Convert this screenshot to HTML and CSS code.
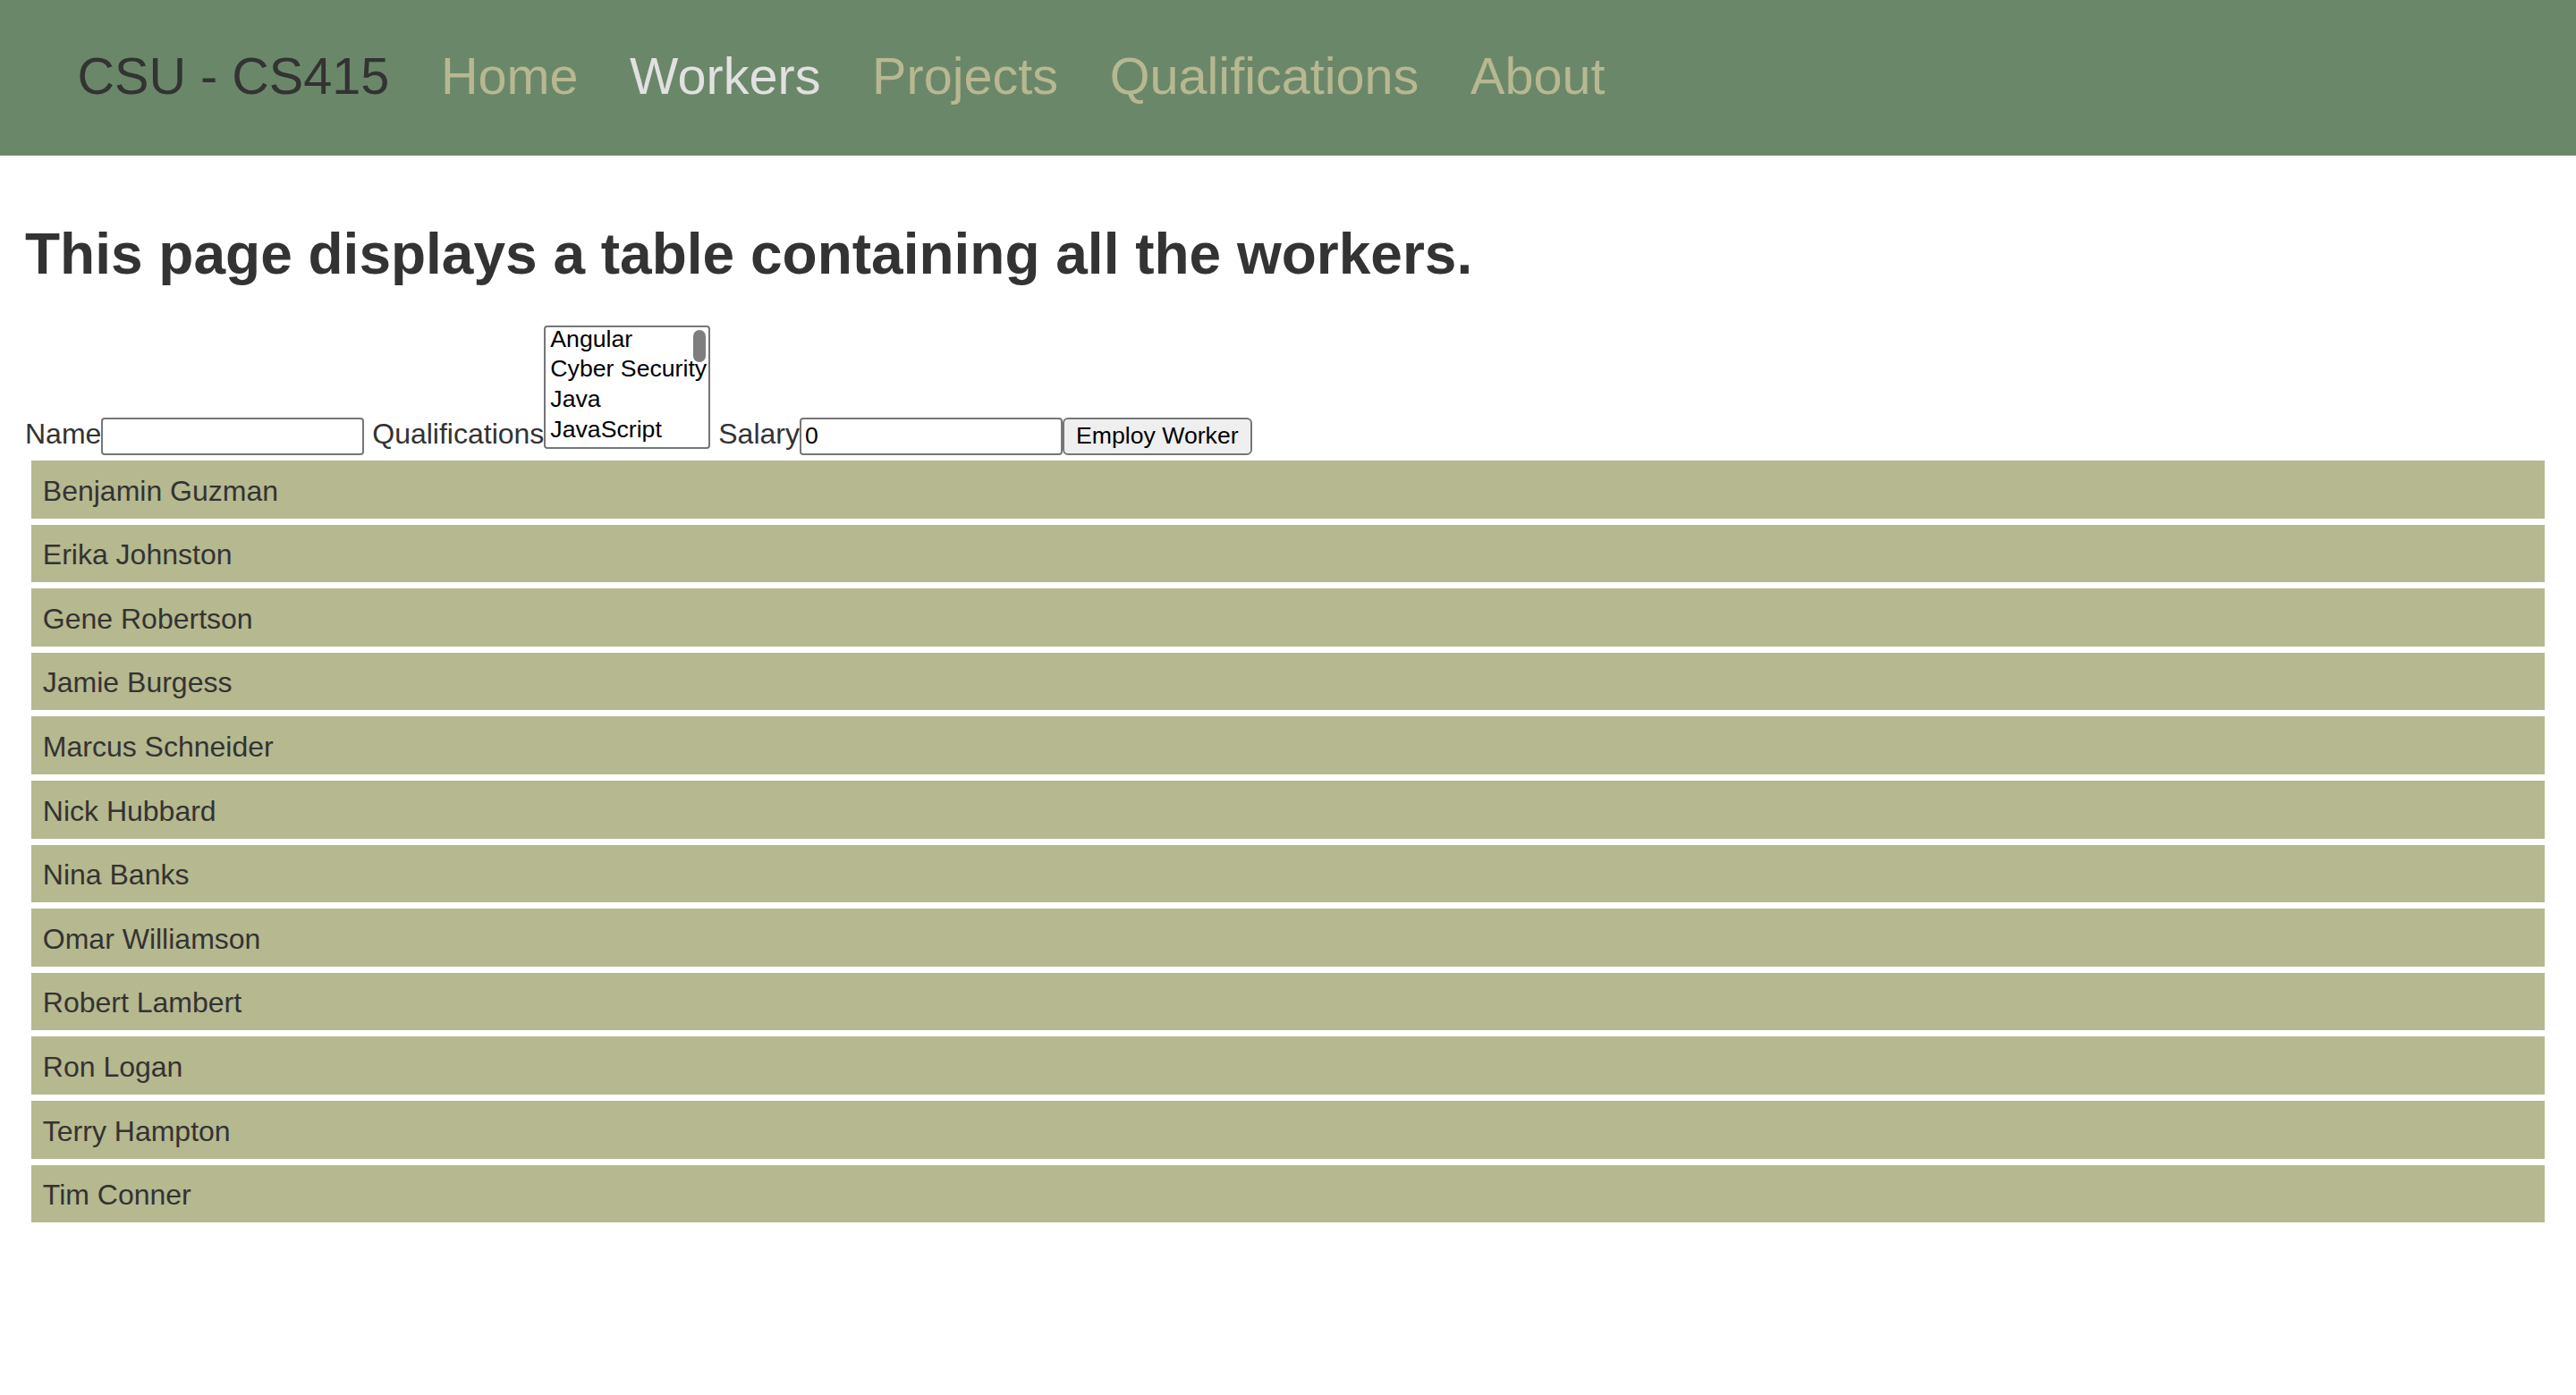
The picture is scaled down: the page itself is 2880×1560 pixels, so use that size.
FILE: index.html
```html
<!DOCTYPE html>
<html lang="en">
<head>
<meta charset="utf-8">
<title>Workers - CSU CS415</title>
<link rel="stylesheet" href="styles.css">
</head>
<body>
<nav class="topnav">
  <a class="brand" href="#">CSU - CS415</a>
  <a class="navlink" href="#">Home</a>
  <a class="navlink active" href="#">Workers</a>
  <a class="navlink" href="#">Projects</a>
  <a class="navlink" href="#">Qualifications</a>
  <a class="navlink" href="#">About</a>
</nav>
<main class="content">
  <h1 class="title">This page displays a table containing all the workers.</h1>
  <form class="employ-form"><label class="lbl">Name</label><input class="field" type="text"> <label class="lbl">Qualifications</label><div class="listbox"><div class="opt">Angular</div><div class="opt">Cyber Security</div><div class="opt">Java</div><div class="opt">JavaScript</div><span class="thumb"></span></div> <label class="lbl">Salary</label><input class="field" type="text" value="0"><button class="btn" type="button">Employ Worker</button></form>
  <div class="worker-list">
    <div class="worker">Benjamin Guzman</div>
    <div class="worker">Erika Johnston</div>
    <div class="worker">Gene Robertson</div>
    <div class="worker">Jamie Burgess</div>
    <div class="worker">Marcus Schneider</div>
    <div class="worker">Nick Hubbard</div>
    <div class="worker">Nina Banks</div>
    <div class="worker">Omar Williamson</div>
    <div class="worker">Robert Lambert</div>
    <div class="worker">Ron Logan</div>
    <div class="worker">Terry Hampton</div>
    <div class="worker">Tim Conner</div>
  </div>
</main>
</body>
</html>
```
FILE: styles.css
```css
html {
  zoom: 2;
}
body {
  margin: 0;
  font-family: "Liberation Sans", Arial, Helvetica, sans-serif;
  font-size: 16px;
  color: #333333;
  background: #ffffff;
}
.topnav {
  display: flex;
  align-items: flex-start;
  gap: 28.8px;
  height: 87px;
  box-sizing: border-box;
  padding: 26px 0 0 43.2px;
  background: #6b8769;
  font-size: 28.8px;
  line-height: normal;
}
.topnav a {
  text-decoration: none;
  white-space: nowrap;
}
.brand {
  color: #333333;
}
.navlink {
  color: #b7b892;
}
.navlink.active {
  color: #e1e1e1;
}
.content {
  padding: 15px 14px 0;
}
.title {
  margin: 21.44px 0;
  font-size: 32px;
  font-weight: bold;
  line-height: normal;
  color: #333333;
}
.employ-form {
  margin: 0;
  line-height: normal;
  white-space: nowrap;
}
.lbl {
  color: #333333;
}
.field {
  box-sizing: border-box;
  width: 147px;
  height: 21px;
  margin: 0;
  padding: 1px 2px;
  border: 1px solid #767676;
  border-radius: 2px;
  font-family: "Liberation Sans", Arial, sans-serif;
  font-size: 13.333px;
  color: #000000;
  background: #ffffff;
  vertical-align: baseline;
}
.listbox {
  display: inline-block;
  position: relative;
  box-sizing: border-box;
  width: 93px;
  height: 69.2px;
  margin-top: 0;
  border: 1px solid #767676;
  border-radius: 2px;
  overflow: hidden;
  vertical-align: -3px;
  background: #ffffff;
  font-size: 13.333px;
  color: #000000;
}
.opt {
  height: 16.8px;
  line-height: 13px;
  padding-left: 2.5px;
  white-space: nowrap;
}
.thumb {
  position: absolute;
  top: 1.5px;
  right: 1.5px;
  width: 7px;
  height: 18.3px;
  border-radius: 4px;
  background: #7e7e7e;
}
.btn {
  box-sizing: border-box;
  height: 21px;
  margin: 0;
  padding: 1px 6.5px;
  border: 1px solid #767676;
  border-radius: 3px;
  background: #efefef;
  font-family: "Liberation Sans", Arial, sans-serif;
  font-size: 13.333px;
  color: #000000;
  vertical-align: baseline;
}
.worker-list {
  display: flex;
  flex-direction: column;
  gap: 3.5px;
  padding: 3.2px 3.5px 3.5px;
}
.worker {
  height: 32.3px;
  box-sizing: border-box;
  padding: 7.8px 6.4px 0;
  line-height: normal;
  background: #b6b88f;
  color: #333333;
}
```
